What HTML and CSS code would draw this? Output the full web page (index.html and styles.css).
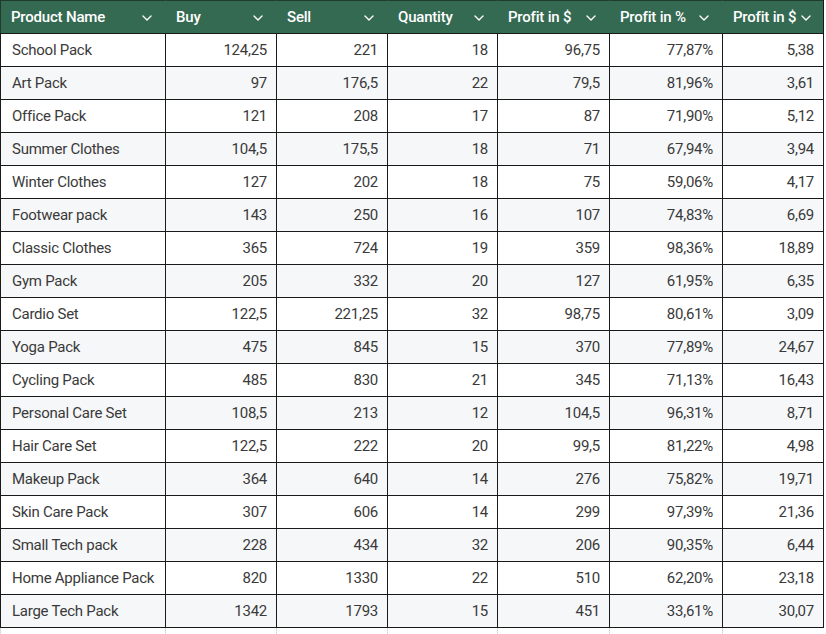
FILE: index.html
```html
<!DOCTYPE html>
<html lang="en">
<head>
<meta charset="utf-8">
<title>Products</title>
<link rel="stylesheet" href="styles.css">
</head>
<body>
<div class="grid" id="grid">
  <div class="hcell first"><span>Product Name</span><svg class="chev" viewBox="0 0 10 6"><polyline points="1,1 5,5 9,1"/></svg></div>
  <div class="hcell"><span>Buy</span><svg class="chev" viewBox="0 0 10 6"><polyline points="1,1 5,5 9,1"/></svg></div>
  <div class="hcell"><span>Sell</span><svg class="chev" viewBox="0 0 10 6"><polyline points="1,1 5,5 9,1"/></svg></div>
  <div class="hcell"><span>Quantity</span><svg class="chev" viewBox="0 0 10 6"><polyline points="1,1 5,5 9,1"/></svg></div>
  <div class="hcell"><span>Profit in $</span><svg class="chev" viewBox="0 0 10 6"><polyline points="1,1 5,5 9,1"/></svg></div>
  <div class="hcell"><span>Profit in %</span><svg class="chev" viewBox="0 0 10 6"><polyline points="1,1 5,5 9,1"/></svg></div>
  <div class="hcell last"><span>Profit in $</span><svg class="chev" viewBox="0 0 10 6"><polyline points="1,1 5,5 9,1"/></svg></div>

  <div class="cell txt">School Pack</div><div class="cell num">124,25</div><div class="cell num">221</div><div class="cell num">18</div><div class="cell num">96,75</div><div class="cell num">77,87%</div><div class="cell num">5,38</div>
  <div class="cell txt alt">Art Pack</div><div class="cell num alt">97</div><div class="cell num alt">176,5</div><div class="cell num alt">22</div><div class="cell num alt">79,5</div><div class="cell num alt">81,96%</div><div class="cell num alt">3,61</div>
  <div class="cell txt">Office Pack</div><div class="cell num">121</div><div class="cell num">208</div><div class="cell num">17</div><div class="cell num">87</div><div class="cell num">71,90%</div><div class="cell num">5,12</div>
  <div class="cell txt alt">Summer Clothes</div><div class="cell num alt">104,5</div><div class="cell num alt">175,5</div><div class="cell num alt">18</div><div class="cell num alt">71</div><div class="cell num alt">67,94%</div><div class="cell num alt">3,94</div>
  <div class="cell txt">Winter Clothes</div><div class="cell num">127</div><div class="cell num">202</div><div class="cell num">18</div><div class="cell num">75</div><div class="cell num">59,06%</div><div class="cell num">4,17</div>
  <div class="cell txt alt">Footwear pack</div><div class="cell num alt">143</div><div class="cell num alt">250</div><div class="cell num alt">16</div><div class="cell num alt">107</div><div class="cell num alt">74,83%</div><div class="cell num alt">6,69</div>
  <div class="cell txt">Classic Clothes</div><div class="cell num">365</div><div class="cell num">724</div><div class="cell num">19</div><div class="cell num">359</div><div class="cell num">98,36%</div><div class="cell num">18,89</div>
  <div class="cell txt alt">Gym Pack</div><div class="cell num alt">205</div><div class="cell num alt">332</div><div class="cell num alt">20</div><div class="cell num alt">127</div><div class="cell num alt">61,95%</div><div class="cell num alt">6,35</div>
  <div class="cell txt">Cardio Set</div><div class="cell num">122,5</div><div class="cell num">221,25</div><div class="cell num">32</div><div class="cell num">98,75</div><div class="cell num">80,61%</div><div class="cell num">3,09</div>
  <div class="cell txt alt">Yoga Pack</div><div class="cell num alt">475</div><div class="cell num alt">845</div><div class="cell num alt">15</div><div class="cell num alt">370</div><div class="cell num alt">77,89%</div><div class="cell num alt">24,67</div>
  <div class="cell txt">Cycling Pack</div><div class="cell num">485</div><div class="cell num">830</div><div class="cell num">21</div><div class="cell num">345</div><div class="cell num">71,13%</div><div class="cell num">16,43</div>
  <div class="cell txt alt">Personal Care Set</div><div class="cell num alt">108,5</div><div class="cell num alt">213</div><div class="cell num alt">12</div><div class="cell num alt">104,5</div><div class="cell num alt">96,31%</div><div class="cell num alt">8,71</div>
  <div class="cell txt">Hair Care Set</div><div class="cell num">122,5</div><div class="cell num">222</div><div class="cell num">20</div><div class="cell num">99,5</div><div class="cell num">81,22%</div><div class="cell num">4,98</div>
  <div class="cell txt alt">Makeup Pack</div><div class="cell num alt">364</div><div class="cell num alt">640</div><div class="cell num alt">14</div><div class="cell num alt">276</div><div class="cell num alt">75,82%</div><div class="cell num alt">19,71</div>
  <div class="cell txt">Skin Care Pack</div><div class="cell num">307</div><div class="cell num">606</div><div class="cell num">14</div><div class="cell num">299</div><div class="cell num">97,39%</div><div class="cell num">21,36</div>
  <div class="cell txt alt">Small Tech pack</div><div class="cell num alt">228</div><div class="cell num alt">434</div><div class="cell num alt">32</div><div class="cell num alt">206</div><div class="cell num alt">90,35%</div><div class="cell num alt">6,44</div>
  <div class="cell txt">Home Appliance Pack</div><div class="cell num">820</div><div class="cell num">1330</div><div class="cell num">22</div><div class="cell num">510</div><div class="cell num">62,20%</div><div class="cell num">23,18</div>
  <div class="cell txt alt">Large Tech Pack</div><div class="cell num alt">1342</div><div class="cell num alt">1793</div><div class="cell num alt">15</div><div class="cell num alt">451</div><div class="cell num alt">33,61%</div><div class="cell num alt">30,07</div>
</div>
<div class="filler">
  <div class="fcell"></div><div class="fcell"></div><div class="fcell"></div><div class="fcell"></div><div class="fcell"></div><div class="fcell"></div><div class="fcell"></div>
</div>
</body>
</html>
```

FILE: styles.css
```css
html, body {
  margin: 0;
  padding: 0;
  background: #ffffff;
}

body {
  font-family: Roboto, "Liberation Sans", Arial, sans-serif;
  font-size: 15px;
  letter-spacing: -0.25px;
  color: #3a3a3a;
}

.grid,
.filler {
  display: grid;
  grid-template-columns: 165px 111px 111px 110px 112px 113px 101px;
  width: 824px;
  box-sizing: border-box;
}

.grid {
  border-right: 1px solid #1a1a1a;
  border-bottom: 1px solid #1a1a1a;
}

.hcell {
  height: 33px;
  box-sizing: border-box;
  background: #356a52;
  color: #ffffff;
  font-weight: 500;
  letter-spacing: -0.2px;
  border-top: 1px solid #1f3b2e;
  border-left: 1px solid #356a52;
  padding: 0 13px 0 10px;
  display: flex;
  align-items: center;
  justify-content: space-between;
  white-space: nowrap;
}

.hcell.first {
  border-left-color: #1f3b2e;
}

.hcell.last {
  padding-right: 12px;
}

.chev {
  width: 10px;
  height: 6px;
  flex: none;
  margin-top: 1px;
}

.chev polyline {
  fill: none;
  stroke: #ffffff;
  stroke-width: 1.4;
  stroke-linecap: round;
  stroke-linejoin: round;
}

.cell {
  height: 33px;
  box-sizing: border-box;
  border-top: 1px solid #1a1a1a;
  border-left: 1px solid #1a1a1a;
  display: flex;
  align-items: center;
  white-space: nowrap;
  background: #ffffff;
}

.cell.alt {
  background: #f6f7f9;
}

.txt {
  padding: 0 10px 0 11px;
  justify-content: flex-start;
}

.num {
  padding: 0 9px;
  justify-content: flex-end;
}

.fcell {
  height: 6px;
  border-left: 1px solid #dcdcdc;
}
```
